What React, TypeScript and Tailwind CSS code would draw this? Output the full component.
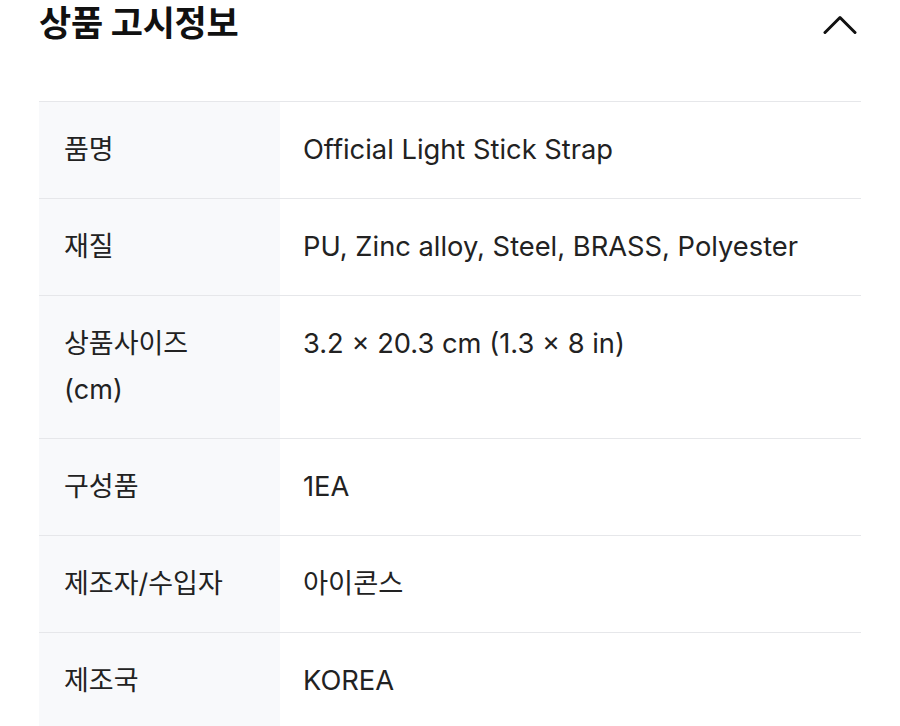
import React from 'react';

interface InfoRow {
  label: React.ReactNode;
  value: string;
}

const rows: InfoRow[] = [
  { label: '품명', value: 'Official Light Stick Strap' },
  { label: '재질', value: 'PU, Zinc alloy, Steel, BRASS, Polyester' },
  {
    label: (
      <>
        상품사이즈
        <br />
        (cm)
      </>
    ),
    value: '3.2 × 20.3 cm (1.3 × 8 in)',
  },
  { label: '구성품', value: '1EA' },
  { label: '제조자/수입자', value: '아이콘스' },
  { label: '제조국', value: 'KOREA' },
];

export default function App() {
  return (
    <div
      className="w-[900px] h-[726px] overflow-hidden bg-white px-[39px] text-[#222]"
      style={{ fontFamily: "Inter, 'Noto Sans CJK KR', sans-serif" }}
    >
      {/* Header */}
      <div className="flex items-center justify-between h-[46px] mb-[55px]">
        <h2 className="text-[35px] font-bold text-[#111] leading-none tracking-[-0.3px]">상품 고시정보</h2>
        <button className="mr-[4px] mt-[4px]">
          <svg width="34" height="20" viewBox="0 0 34 20" fill="none">
            <path d="M2 17.5 L17 2.5 L32 17.5" stroke="#111" strokeWidth="3" strokeLinecap="round" strokeLinejoin="round" />
          </svg>
        </button>
      </div>

      {/* Table */}
      <div className="border-t border-[#e6e7ea]">
        {rows.map((row, idx) => (
          <div key={idx} className="flex border-b border-[#e6e7ea]">
            <div className="w-[241px] shrink-0 bg-[#f8f9fb] pl-[25px] pr-[8px] py-[25px] text-[27px] leading-[46px] whitespace-nowrap">
              {row.label}
            </div>
            <div className="flex-1 pl-[23px] py-[25px] text-[27.3px] leading-[46px]">{row.value}</div>
          </div>
        ))}
      </div>
    </div>
  );
}
